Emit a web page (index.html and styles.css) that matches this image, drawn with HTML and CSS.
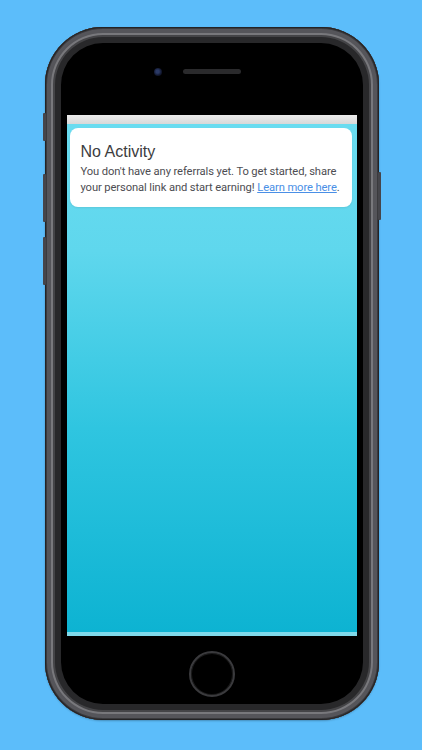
FILE: index.html
```html
<!DOCTYPE html>
<html lang="en">
<head>
<meta charset="utf-8">
<title>No Activity</title>
<link rel="stylesheet" href="styles.css">
</head>
<body>
<div class="stage">
  <div class="phone">
    <div class="side-btn mute"></div>
    <div class="side-btn vol-up"></div>
    <div class="side-btn vol-down"></div>
    <div class="side-btn power"></div>
    <div class="top-bezel">
      <div class="camera"></div>
      <div class="speaker"></div>
      <div></div>
    </div>
    <div class="screen">
      <div class="nav-strip"></div>
      <div class="content">
        <div class="card">
          <h1 class="card-title">No Activity</h1>
          <p class="card-text">You don't have any referrals yet. To get started, share your personal link and start earning! <a class="card-link" href="#">Learn more here</a>.</p>
        </div>
      </div>
      <div class="bottom-strip"></div>
    </div>
    <div class="bottom-bezel">
      <div class="home-btn"></div>
    </div>
  </div>
</div>
</body>
</html>
```
FILE: styles.css
```css
html, body {
  margin: 0;
  padding: 0;
}
body {
  background: #5cbdfa;
  width: 422px;
  height: 750px;
  overflow: hidden;
  font-family: "Liberation Sans", Arial, sans-serif;
}
.stage {
  display: flex;
  justify-content: center;
  padding-top: 27px;
  padding-left: 1px;
}
.phone {
  position: relative;
  width: 334px;
  height: 693px;
  box-sizing: border-box;
  border-radius: 58px;
  background: #000;
  box-shadow:
    inset 0 0 0 1px #232325,
    inset 0 0 0 2px #3a3a3d,
    inset 0 0 0 6px #55555a,
    inset 0 0 0 8px #78787c,
    inset 0 0 0 10px #444447,
    inset 0 0 0 16px #28282a,
    0 1px 2px rgba(0,0,0,0.25);
  padding: 0 22px;
  display: flex;
  flex-direction: column;
}
.side-btn {
  position: absolute;
  width: 3px;
  background: #45454a;
  border-radius: 1px;
}
.mute { left: -2px; top: 86px; height: 28px; }
.vol-up { left: -2px; top: 147px; height: 48px; }
.vol-down { left: -2px; top: 210px; height: 48px; }
.power { right: -2px; top: 145px; height: 48px; }

.top-bezel {
  height: 88px;
  display: grid;
  grid-template-columns: 1fr auto 1fr;
  align-items: center;
  column-gap: 21px;
}
.camera {
  justify-self: end;
  width: 8px;
  height: 8px;
  border-radius: 50%;
  background: radial-gradient(circle at 45% 45%, #2b3a66 0 25%, #121830 60%, #0a0a10 100%);
  margin-top: 1px;
}
.speaker {
  width: 58px;
  height: 5px;
  border-radius: 3px;
  background: #2a2a2c;
}
.screen {
  height: 521px;
  display: flex;
  flex-direction: column;
  background: #0db4d2;
  overflow: hidden;
}
.nav-strip {
  height: 9px;
  background: linear-gradient(#ececec, #d8d8d8);
}
.content {
  flex: 1;
  padding: 4px 5px 0 3px;
  background: linear-gradient(#6adcf0 0%, #5fd7ed 25%, #2fc5e0 60%, #0db3d2 100%);
}
.card {
  background: #fff;
  border-radius: 8px;
  padding: 14px 8px 11px 11px;
  box-shadow: 0 1px 2px rgba(0,0,0,0.08);
}
.card-title {
  margin: 0 0 3px 0;
  font-size: 16px;
  font-weight: 400;
  color: #3c3c40;
  line-height: 19px;
}
.card-text {
  margin: 0;
  font-family: Roboto, "Liberation Sans", Arial, sans-serif;
  font-size: 11.2px;
  letter-spacing: -0.1px;
  line-height: 16px;
  color: #4d4d52;
}
.card-link {
  color: #4a8fe6;
  text-decoration: underline;
}
.bottom-strip {
  height: 4px;
  background: #80d9ea;
}
.bottom-bezel {
  flex: 1;
  display: flex;
  justify-content: center;
  align-items: center;
  padding-bottom: 8px;
}
.home-btn {
  width: 42px;
  height: 42px;
  border-radius: 50%;
  border: 2px solid #3a3a3d;
  box-shadow: inset 0 0 0 1px #1a1a1a;
  background: #000;
}
```
